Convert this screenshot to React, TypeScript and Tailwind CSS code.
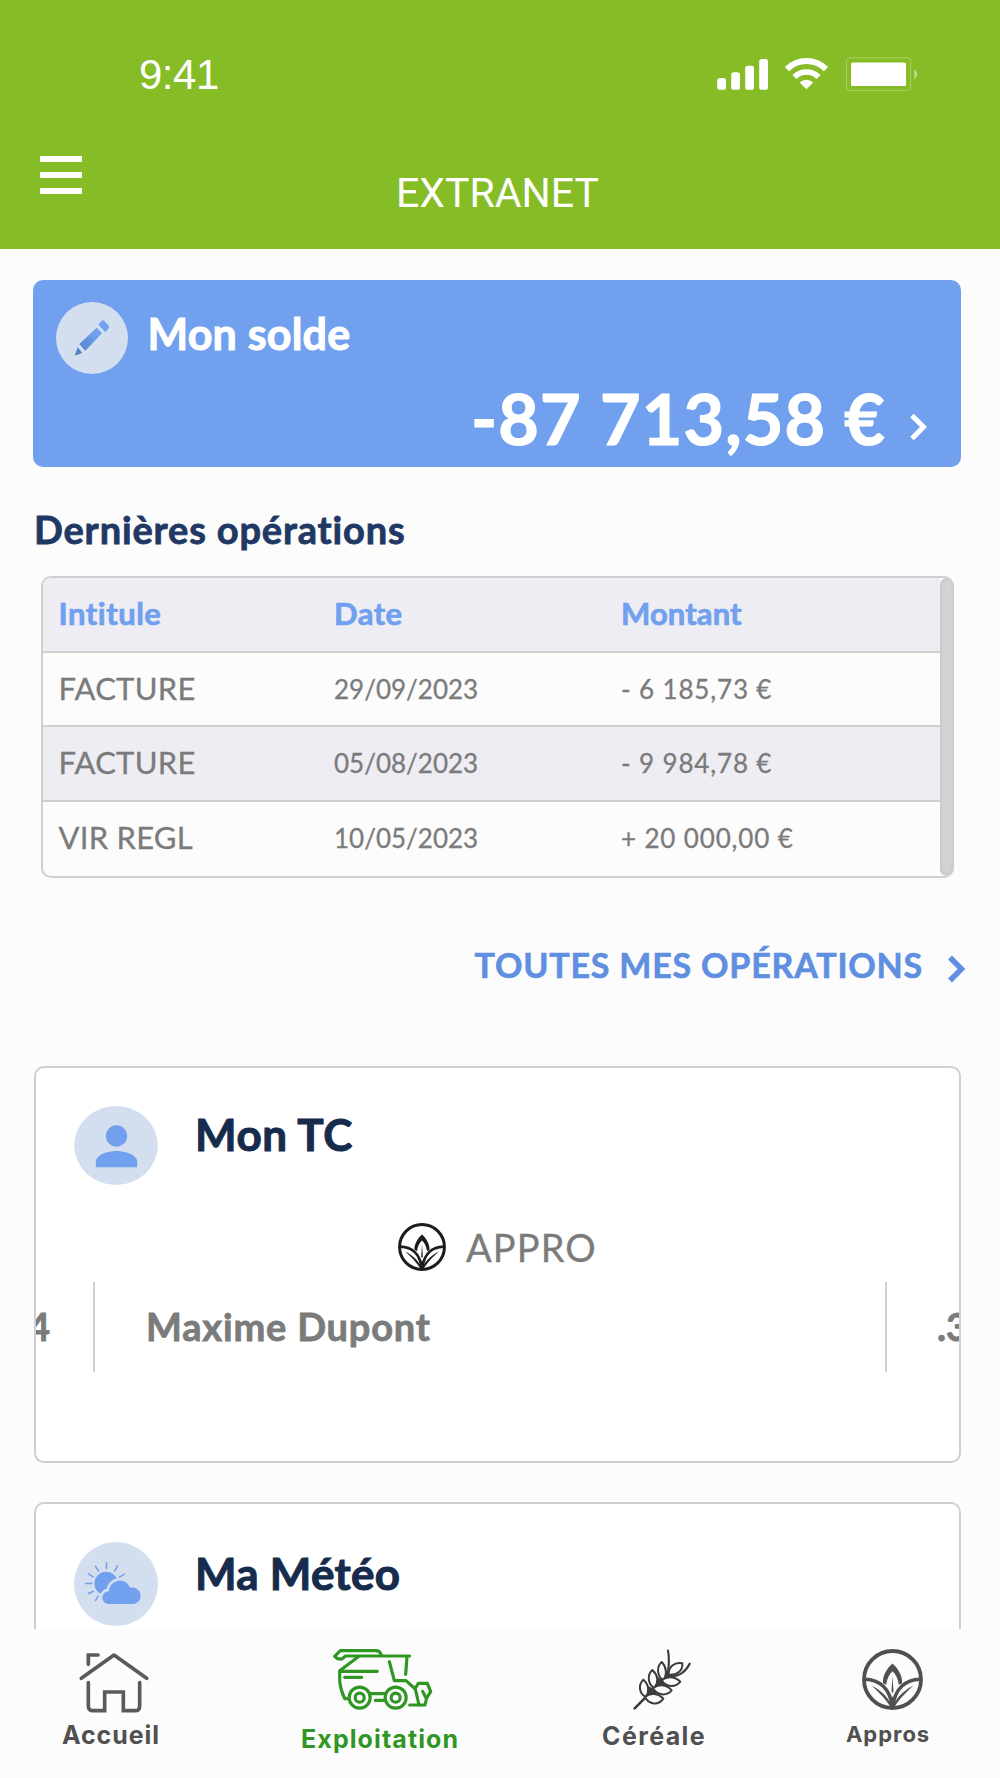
type Operation = {
  label: string;
  date: string;
  amount: string;
  row: string;
};

const operations: Operation[] = [
  { label: 'FACTURE', date: '29/09/2023', amount: '- 6 185,73 €', row: 'h-[74px] border-b-2' },
  { label: 'FACTURE', date: '05/08/2023', amount: '- 9 984,78 €', row: 'h-[75px] border-b-2 bg-[#eeedf3]' },
  { label: 'VIR REGL', date: '10/05/2023', amount: '+ 20 000,00 €', row: 'h-[74px]' },
];

function StatusIcons() {
  return (
    <svg width="204" height="38" viewBox="0 0 204 38" fill="white">
      <rect x="1.2" y="22" width="8.8" height="11.8" rx="2.6" />
      <rect x="15.2" y="16.2" width="8.8" height="17.6" rx="2.6" />
      <rect x="29.2" y="9.8" width="8.8" height="24" rx="2.6" />
      <rect x="43.2" y="3" width="8.8" height="30.8" rx="2.6" />
      <g fill="none" stroke="white" strokeWidth="6">
        <path d="M71 13.2 A27.5 27.5 0 0 1 110 13.2" />
        <path d="M78.4 21 A17 17 0 0 1 102.6 21" strokeWidth="5.6" />
      </g>
      <path d="M83.6 26.4 A10 10 0 0 1 97.2 26.4 L90.4 33.2 Z" />
      <rect x="130.5" y="1.8" width="64.2" height="32.6" rx="3" fill="none" stroke="white" strokeOpacity="0.3" strokeWidth="1" />
      <rect x="135" y="6.6" width="55" height="23.4" rx="1.5" />
      <path d="M198 13.2 C202.6 15 202.6 21.4 198 23.2 Z" fillOpacity="0.4" />
    </svg>
  );
}

function Chevron({ className, weight }: { className?: string; weight: number }) {
  return (
    <svg className={className} width="18" height="28" viewBox="0 0 18 28" fill="none" stroke="currentColor" strokeWidth={weight}>
      <path d="M2 2.5 L13.5 14 L2 25.5" />
    </svg>
  );
}

function PencilBadge() {
  return (
    <svg width="72" height="72" viewBox="0 0 216 216">
      <defs>
        <linearGradient id="pencil" gradientUnits="userSpaceOnUse" x1="58" y1="159" x2="120" y2="95">
          <stop offset="0" stopColor="#4f7cc0" />
          <stop offset="1" stopColor="#70a0ee" />
        </linearGradient>
      </defs>
      <circle cx="108" cy="108" r="108" fill="#d3dfef" />
      <g fill="url(#pencil)">
        <path d="M70 126 L122 77 L138 94 L88 146 Z" />
        <path d="M127 68 L137 57 Q141 53 145 57 L158 71 Q161 75 158 79 L148 91 Z" />
        <path d="M65 136 L79 153 L60 160 Q56 161 58 156 Z" />
      </g>
    </svg>
  );
}

function PersonBadge() {
  return (
    <svg width="84" height="79" viewBox="0 0 251 237">
      <ellipse cx="125.5" cy="118.5" rx="125.5" ry="118.5" fill="#d3dfef" />
      <g fill="#70a0ee">
        <circle cx="127" cy="90" r="32" />
        <path d="M65 184 V167 C65 147 100 135 127 135 S189 147 189 167 V184 Z" />
      </g>
    </svg>
  );
}

function WeatherBadge() {
  return (
    <svg width="84" height="84" viewBox="0 0 251 251">
      <circle cx="125.5" cy="125.5" r="125.5" fill="#d3dfef" />
      <circle cx="96" cy="124" r="35" fill="#70a0ee" />
      <path
        d="M97 62 V79 M64 72 L73 87 M43 95 L57 104 M35 124 H53 M43 154 L58 147 M64 175 L72 162 M121 87 L130 71 M136 105 L151 96"
        stroke="#70a0ee"
        strokeWidth="4.5"
        strokeLinecap="round"
      />
      <path
        d="M103 185 A19 19 0 0 1 104 147 A33 33 0 0 1 168 137 A24.5 24.5 0 1 1 173 185 Z"
        fill="#70a0ee"
        stroke="#d3dfef"
        strokeWidth="16"
        paintOrder="stroke"
      />
    </svg>
  );
}

function LotusIcon({ className, size }: { className?: string; size: number }) {
  return (
    <svg className={className} width={size} height={size} viewBox="0 0 184 184" fill="none" stroke="currentColor">
      <circle cx="92" cy="92" r="86" strokeWidth="11.5" />
      <path d="M9 91 C52 92 84 118 91 172" strokeWidth="10.5" />
      <path d="M175 91 C132 92 100 118 93 172" strokeWidth="10.5" />
      <g fill="currentColor" stroke="none">
        <path d="M92 44 C106 56 122 78 121 103 L111 108 C109 90 102 76 92 67 C82 76 75 90 73 108 L63 103 C62 78 78 56 92 44 Z" />
        <path d="M92 82 L95 127 L92 134 L89 127 Z" />
        <path d="M28 109 C52 122 76 140 90 170 L86 174 C68 146 48 128 28 109 Z" />
        <path d="M156 109 C132 122 108 140 94 170 L98 174 C116 146 136 128 156 109 Z" />
        <path d="M92 140 L100 176 H84 Z" />
      </g>
    </svg>
  );
}

function HouseIcon({ className }: { className?: string }) {
  return (
    <svg className={className} width="70" height="62" viewBox="0 0 210 186" fill="none" stroke="currentColor" strokeWidth="11" strokeLinecap="round">
      <path d="M7 79 L105 9 L203 79" strokeLinejoin="round" />
      <path d="M28 37 V9 H57" />
      <path d="M28 92 V161 Q28 176 43 176 H77 V120 H133 V176 H168 Q182 176 182 161 V92" />
    </svg>
  );
}

function HarvesterIcon({ className }: { className?: string }) {
  return (
    <svg
      className={className}
      width="100"
      height="62"
      viewBox="0 0 300 186"
      fill="none"
      stroke="currentColor"
      strokeWidth="9.5"
      strokeLinecap="round"
      strokeLinejoin="round"
    >
      <path d="M144 17 Q141 5 128 5 H22 L5 22 Q15 33 26 30 Q32 27 37 21 H230" />
      <path d="M76 23 L20 65 V96 Q22 122 35 149 H46 M20 67 H133 M35 85 H86" />
      <circle cx="80" cy="146" r="31.5" />
      <circle cx="80" cy="146" r="13.5" />
      <circle cx="188" cy="146" r="31.5" />
      <circle cx="188" cy="146" r="13.5" />
      <path d="M112 134 H156 M127 154 H152" />
      <path d="M169 38 L184 95 H219 L247 120 L258 168 M222 24 L218 76" />
      <path d="M246 119 L256 103 H283 L293 128 L281 147 L276 168 H230 M269 127 L280 149" />
    </svg>
  );
}

function WheatIcon({ className }: { className?: string }) {
  return (
    <svg className={className} width="59" height="61" viewBox="0 0 177 183" stroke="currentColor" strokeLinecap="round" strokeLinejoin="round">
      <path d="M5 178 L40 143" fill="none" strokeWidth="8" />
      <path d="M44 144 L42 112 L74 130 Z M68 120 L70 84 L98 104 Z M94 96 L98 68 L124 84 Z" fill="currentColor" strokeWidth="5" />
      <path d="M105 5 C110 32 108 52 104 76 M170 44 C158 68 142 80 110 84" fill="none" strokeWidth="6.5" />
      <g fill="#fcfcfc" strokeWidth="6">
        <path d="M38 144 C18 132 15 108 31 92 C48 106 50 128 38 144 Z" />
        <path d="M64 118 C44 104 42 78 58 63 C74 78 78 98 64 118 Z" />
        <path d="M90 94 C72 80 70 54 86 39 C100 52 104 76 90 94 Z" />
        <path d="M36 144 C50 130 76 132 91 149 C76 170 48 168 36 144 Z" />
        <path d="M60 118 C76 104 100 106 116 124 C100 142 74 140 60 118 Z" />
        <path d="M86 94 C102 80 126 82 142 98 C128 116 100 116 86 94 Z" />
        <path d="M107 77 C106 54 124 38 148 43 C150 64 132 80 107 77 Z" />
      </g>
    </svg>
  );
}

export default function App() {
  return (
    <div className="flex h-[1778px] w-[1000px] flex-col overflow-hidden bg-[#fcfcfc] font-[Lato,'Open_Sans',sans-serif]">
      <header className="h-[249px] shrink-0 bg-[#86bc25] text-white">
        <div className="flex justify-between pt-[54px] pr-[80px] pl-[139px]">
          <span className="font-['Liberation_Sans',sans-serif] text-[42px] leading-[42px] tracking-[-0.5px]">9:41</span>
          <div className="pt-0.5">
            <StatusIcons />
          </div>
        </div>
        <div className="flex pt-[59px] pl-[39.5px]">
          <button className="mt-[0.5px] flex h-[38px] w-[42.5px] flex-col justify-between" aria-label="Menu">
            <span className="h-[6px] w-full bg-white"></span>
            <span className="h-[6px] w-full bg-white"></span>
            <span className="h-[6px] w-full bg-white"></span>
          </button>
          <h1 className="mt-[14px] ml-[314px] font-[Roboto,sans-serif] text-[41px] leading-[48px]">EXTRANET</h1>
        </div>
      </header>

      <main className="min-h-0 flex-1 overflow-hidden px-[33px]">
        <section className="mt-[31px] h-[187px] w-[928px] rounded-[10px] bg-[#70a0ee] pt-[22px] text-white">
          <div className="flex pl-[23px]">
            <PencilBadge />
            <h2 className="mt-[8px] ml-[19.5px] text-[43px] leading-[48px] font-bold tracking-[0.2px] [-webkit-text-stroke:1px]">Mon solde</h2>
          </div>
          <div className="mt-[8px] flex pl-[438px]">
            <span className="w-[439px] text-[70px] leading-[72px] font-bold tracking-[1.15px] whitespace-nowrap [-webkit-text-stroke:1.2px]">
              -87 713,58 €
            </span>
            <Chevron className="mt-[31px]" weight={5} />
          </div>
        </section>

        <h2 className="mt-[42px] ml-px text-[38px] leading-[40px] font-bold tracking-[0.84px] text-[#1f3864] [-webkit-text-stroke:0.8px]">
          Dernières opérations
        </h2>

        <div className="mt-[27px] ml-2 flex h-[302px] w-[913px] overflow-hidden rounded-[10px] border-2 border-r-0 border-[#cfcfcf]">
          <div className="w-[897px] text-[31px] leading-[71px] text-[#7b7b7b]">
            <div className="grid h-[75px] grid-cols-[275.5px_287px_1fr] border-b-2 border-[#cfcfcf] bg-[#eeedf3] pl-[15.5px] font-bold text-[#70a0ee] [-webkit-text-stroke:0.7px]">
              <span className="tracking-[0.5px]">Intitule</span>
              <span className="tracking-[0.5px]">Date</span>
              <span className="tracking-[0.1px]">Montant</span>
            </div>
            {operations.map((op) => (
              <div key={op.date} className={`grid grid-cols-[275.5px_287px_1fr] border-[#cfcfcf] pl-[15.5px] [-webkit-text-stroke:0.3px] ${op.row}`}>
                <span className="tracking-[0.25px]">{op.label}</span>
                <span className="text-[26px] leading-[73px]">{op.date}</span>
                <span className="text-[26px] leading-[73px] tracking-[0.85px]">{op.amount}</span>
              </div>
            ))}
          </div>
          <div className="w-[14px] rounded-full bg-[#d3d3d3] shadow-[inset_0_0_4px_#bdbdbd]"></div>
        </div>

        <a className="mt-[67px] flex pl-[441.5px] text-[#5f8fe0]">
          <span className="w-[473px] text-[34px] leading-[40px] font-bold tracking-[0.8px] whitespace-nowrap [-webkit-text-stroke:0.6px]">
            TOUTES MES OPÉRATIONS
          </span>
          <Chevron className="mt-[10px]" weight={5.5} />
        </a>

        <section className="mt-[81px] ml-px h-[397px] w-[927px] overflow-hidden rounded-[10px] border-2 border-[#cfcfcf] bg-white pt-[38px]">
          <div className="flex pl-[38px]">
            <PersonBadge />
            <h2 className="mt-[3px] ml-[37px] text-[44px] leading-[50px] font-bold tracking-[0.5px] text-[#172b4d] [-webkit-text-stroke:1px]">Mon TC</h2>
          </div>
          <div className="mt-[38px] flex pl-[362px]">
            <LotusIcon className="text-[#1c1c1c]" size={48} />
            <span className="ml-[20px] text-[38px] leading-[49px] tracking-[1.1px] text-[#7b7b7b] [-webkit-text-stroke:0.3px]">APPRO</span>
          </div>
          <div className="mt-[10px] flex h-[90px] text-[38px] leading-[88px] font-bold text-[#7b7b7b] [-webkit-text-stroke:0.8px]">
            <span className="-ml-[8px] w-[65px] shrink-0">4</span>
            <div className="w-[794px] shrink-0 border-x-2 border-[#cfcfcf] pl-[51px] tracking-[0.8px]">Maxime Dupont</div>
            <span className="ml-[50px] shrink-0">.3</span>
          </div>
        </section>

        <section className="mt-[39px] ml-px h-[398px] w-[927px] rounded-[10px] border-2 border-[#cfcfcf] bg-white pt-[38px]">
          <div className="flex pl-[38px]">
            <WeatherBadge />
            <h2 className="mt-[6px] ml-[37px] text-[44px] leading-[50px] font-bold tracking-[0.25px] text-[#172b4d] [-webkit-text-stroke:1px]">Ma Météo</h2>
          </div>
        </section>
      </main>

      <nav className="flex h-[149px] shrink-0 bg-[#fcfcfc] pt-[20px] pl-[62px] font-[Inter,sans-serif] text-[25px] leading-[28px] font-bold whitespace-nowrap text-[#505050]">
        <a className="w-[97px]">
          <HouseIcon className="mt-[3px] ml-[16.5px] text-[#5a5a5a]" />
          <span className="mt-[7px] block tracking-[0.9px]">Accueil</span>
        </a>
        <a className="ml-[142px] w-[157px] text-[#2f9624]">
          <HarvesterIcon className="ml-[32px]" />
          <span className="mt-[14px] block tracking-[1.1px]">Exploitation</span>
        </a>
        <a className="ml-[144px] w-[104px]">
          <WheatIcon className="ml-[31px] text-[#3c3c3c]" />
          <span className="mt-[12px] block tracking-[1.4px]">Céréale</span>
        </a>
        <a className="ml-[140px] w-[84px]">
          <LotusIcon className="ml-[16px]" size={61} />
          <span className="mt-[10px] block text-[22px] tracking-[0.95px]">Appros</span>
        </a>
      </nav>
    </div>
  );
}
